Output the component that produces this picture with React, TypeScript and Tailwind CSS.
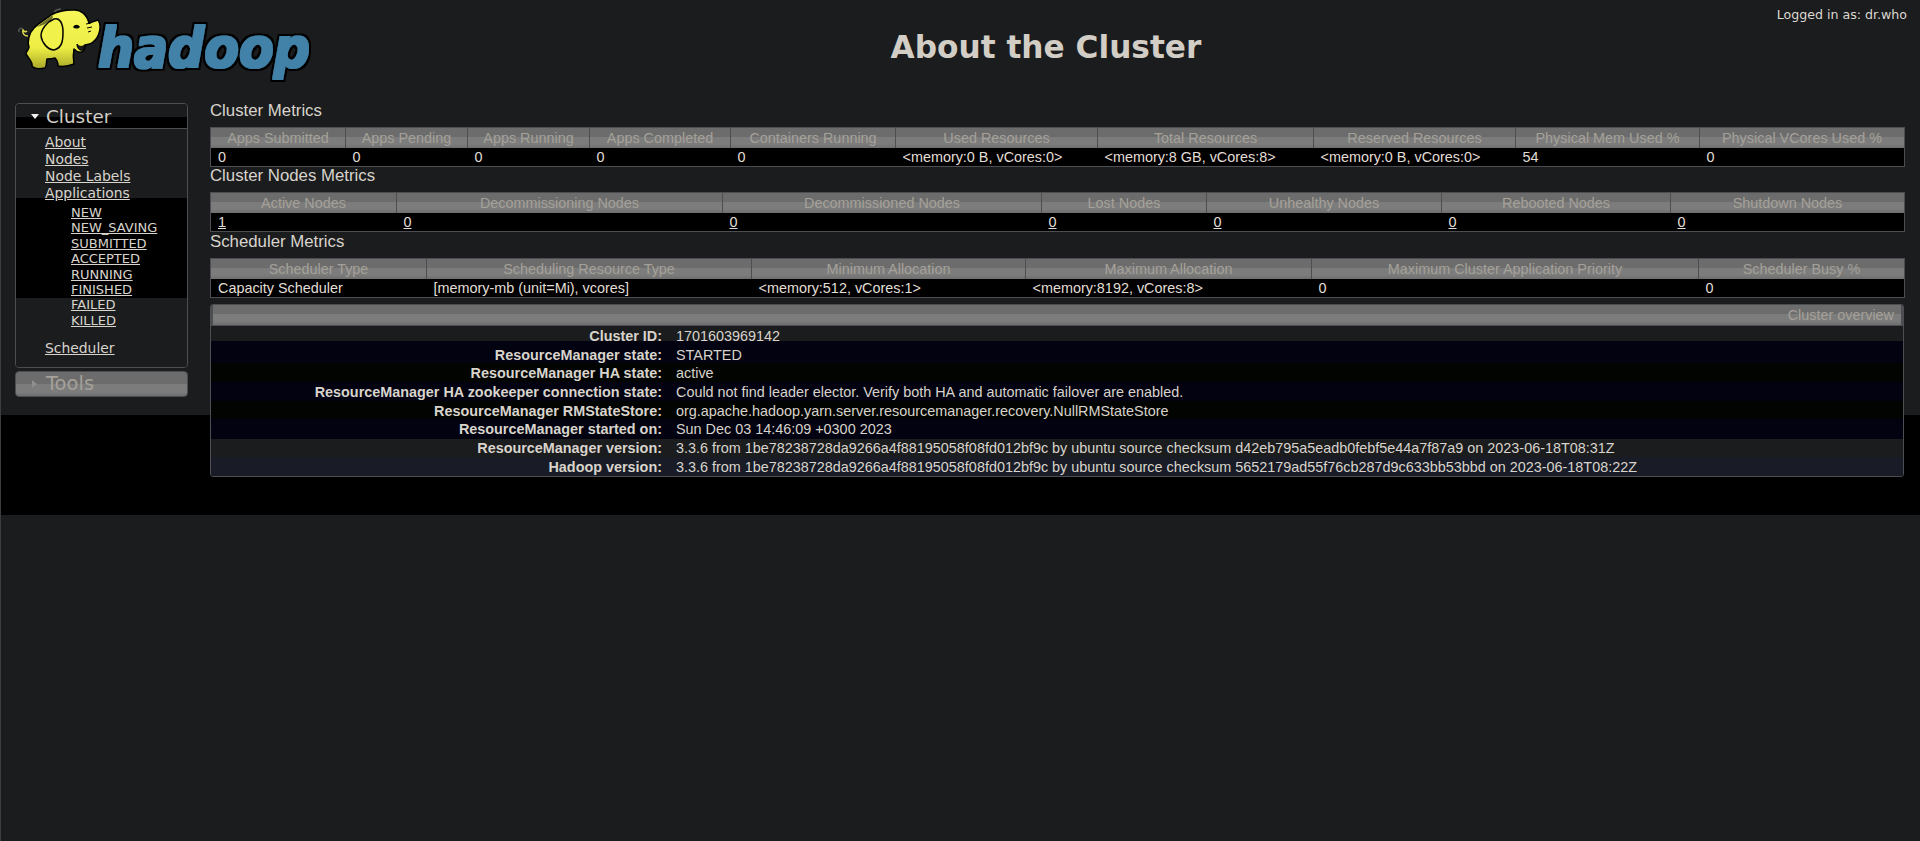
const clusterCols = [
  { label: 'Apps Submitted', width: 'w-[135px]', value: '0' },
  { label: 'Apps Pending', width: 'w-[122px]', value: '0' },
  { label: 'Apps Running', width: 'w-[122px]', value: '0' },
  { label: 'Apps Completed', width: 'w-[141px]', value: '0' },
  { label: 'Containers Running', width: 'w-[165px]', value: '0' },
  { label: 'Used Resources', width: 'w-[202px]', value: '<memory:0 B, vCores:0>' },
  { label: 'Total Resources', width: 'w-[216px]', value: '<memory:8 GB, vCores:8>' },
  { label: 'Reserved Resources', width: 'w-[202px]', value: '<memory:0 B, vCores:0>' },
  { label: 'Physical Mem Used %', width: 'w-[184px]', value: '54' },
  { label: 'Physical VCores Used %', width: 'w-[205px]', value: '0' },
];

const nodeCols = [
  { label: 'Active Nodes', width: 'w-[186px]', value: '1', link: true },
  { label: 'Decommissioning Nodes', width: 'w-[326px]', value: '0', link: true },
  { label: 'Decommissioned Nodes', width: 'w-[319px]', value: '0', link: true },
  { label: 'Lost Nodes', width: 'w-[165px]', value: '0', link: true },
  { label: 'Unhealthy Nodes', width: 'w-[235px]', value: '0', link: true },
  { label: 'Rebooted Nodes', width: 'w-[229px]', value: '0', link: true },
  { label: 'Shutdown Nodes', width: 'w-[234px]', value: '0', link: true },
];

const schedulerCols = [
  { label: 'Scheduler Type', width: 'w-[216px]', value: 'Capacity Scheduler' },
  { label: 'Scheduling Resource Type', width: 'w-[325px]', value: '[memory-mb (unit=Mi), vcores]' },
  { label: 'Minimum Allocation', width: 'w-[274px]', value: '<memory:512, vCores:1>' },
  { label: 'Maximum Allocation', width: 'w-[286px]', value: '<memory:8192, vCores:8>' },
  { label: 'Maximum Cluster Application Priority', width: 'w-[387px]', value: '0' },
  { label: 'Scheduler Busy %', width: 'w-[206px]', value: '0' },
];

const overview = [
  { label: 'Cluster ID:', value: '1701603969142', bg: 'bg-[linear-gradient(#1b1c1e_15px,#020210_15px)]' },
  { label: 'ResourceManager state:', value: 'STARTED', bg: 'bg-[#020210]' },
  { label: 'ResourceManager HA state:', value: 'active', bg: 'bg-[#020402]' },
  { label: 'ResourceManager HA zookeeper connection state:', value: 'Could not find leader elector. Verify both HA and automatic failover are enabled.', bg: 'bg-[#020210]' },
  { label: 'ResourceManager RMStateStore:', value: 'org.apache.hadoop.yarn.server.resourcemanager.recovery.NullRMStateStore', bg: 'bg-[#020402]' },
  { label: 'ResourceManager started on:', value: 'Sun Dec 03 14:46:09 +0300 2023', bg: 'bg-[#020210]' },
  { label: 'ResourceManager version:', value: '3.3.6 from 1be78238728da9266a4f88195058f08fd012bf9c by ubuntu source checksum d42eb795a5eadb0febf5e44a7f87a9 on 2023-06-18T08:31Z', bg: 'bg-[linear-gradient(#020210_1px,#1b1c1e_1px)]' },
  { label: 'Hadoop version:', value: '3.3.6 from 1be78238728da9266a4f88195058f08fd012bf9c by ubuntu source checksum 5652179ad55f76cb287d9c633bb53bbd on 2023-06-18T08:22Z', bg: 'bg-[#191c26]' },
];

const appStates = ['NEW', 'NEW_SAVING', 'SUBMITTED', 'ACCEPTED', 'RUNNING', 'FINISHED', 'FAILED', 'KILLED'];

const bandBg = 'bg-[linear-gradient(#6c6c6c_0,#6c6c6c_45%,#7c7c7c_45%,#7c7c7c_80%,#6e6e6e_100%)]';

function Logo() {
  return (
    <svg width="320" height="90" viewBox="0 0 320 90" className="block overflow-visible">
      <defs>
        <linearGradient id="ele" x1="0" y1="0" x2="0" y2="1">
          <stop offset="0" stopColor="#f7f75a" />
          <stop offset="0.65" stopColor="#eded45" />
          <stop offset="1" stopColor="#a8a828" />
        </linearGradient>
        <filter id="word" x="-5%" y="-20%" width="110%" height="140%">
          <feMorphology in="SourceGraphic" operator="dilate" radius="0.9 0.6" result="fat" />
          <feMorphology in="SourceAlpha" operator="dilate" radius="3.2" result="outline" />
          <feMerge>
            <feMergeNode in="outline" />
            <feMergeNode in="fat" />
          </feMerge>
        </filter>
      </defs>
      <text
        x="97"
        y="67"
        textLength="212"
        lengthAdjust="spacingAndGlyphs"
        fontFamily="'DejaVu Sans', sans-serif"
        fontWeight="700"
        fontStyle="italic"
        fontSize="56"
        fill="#4282a8"
        filter="url(#word)"
      >
        hadoop
      </text>
      {/* tail and motion marks */}
      <path d="M27 36C23 36 21 33 22 30C23 32 25 32 26 31" fill="none" stroke="#d8d850" strokeWidth="1.6" />
      <path d="M18 32C17 30 19 28 21 28M53 12C55 10 57 9 60 9" fill="none" stroke="#55564f" strokeWidth="1.5" />
      {/* body */}
      <path
        d="M72 10C80 9 86 15 88 23L97 20C101 25 99 37 92 42C89 45 86 44 84 45C84 50 82 53 78 52C76 52 74 50 73 49C72 54 72 59 73 64C68 66 62 67 57 66C57 63 56 60 54 58C51 59 48 59 46 59C45 63 46 66 44 68C39 69 33 69 31 66C32 62 28 59 25 54C25 51 28 50 28 47C26 42 28 33 33 28C39 22 44 20 50 15C57 11 64 10 72 10Z"
        fill="url(#ele)"
        stroke="#000"
        strokeWidth="1.5"
        strokeLinejoin="round"
      />
      {/* back shading */}
      <path d="M36 27C41 22 46 20 51 15C53 17 51 20 48 22C44 24 40 26 36 27Z" fill="#6f7030" />
      {/* ear */}
      <path
        d="M53 19C59 17 62 24 62 32C62 41 61 48 53 50C47 50 41 43 40 36C40 29 46 22 53 19Z"
        fill="#f1f14c"
        stroke="#000"
        strokeWidth="1.5"
      />
      {/* eye and trunk wrinkles */}
      <path d="M72 27C74 24 77 24 79 27C77 29 74 29 72 27Z" fill="#000" />
      <path d="M85 24L90 23M86 28L91 27M87 32L90 31" stroke="#000" strokeWidth="1" fill="none" />
      {/* mouth */}
      <path d="M76 44C78 47 81 47 84 45C84 50 81 51 79 50C77 49 76 47 76 44Z" fill="#1b1c1e" stroke="#000" strokeWidth="1" />
    </svg>
  );
}

function Triangle({ open }: { open: boolean }) {
  return open ? (
    <svg width="8" height="5" viewBox="0 0 8 5" className="shrink-0">
      <path d="M0 0H8L4 5Z" fill="#f2f2f2" />
    </svg>
  ) : (
    <svg width="5" height="8" viewBox="0 0 5 8" className="shrink-0">
      <path d="M0 0L5 4L0 8Z" fill="#8e8e8e" />
    </svg>
  );
}

function MetricTable({ cols }: { cols: { label: string; width: string; value: string; link?: boolean }[] }) {
  return (
    <table className="w-[1694px] table-fixed border-collapse border border-[#4c4e52] text-[14.4px] leading-[18px]">
      <thead>
        <tr className={bandBg}>
          {cols.map(c => (
            <th key={c.label} className={`${c.width} h-[20px] p-0 border-r border-[#4c4e52] text-center font-normal text-[#a5a199]`}>
              {c.label}
            </th>
          ))}
        </tr>
      </thead>
      <tbody>
        <tr className="bg-black">
          {cols.map(c => (
            <td key={c.label} className="h-[19px] p-0 pl-[7px] text-left text-[#e2ded6]">
              {c.link ? <a className="underline">{c.value}</a> : c.value}
            </td>
          ))}
        </tr>
      </tbody>
    </table>
  );
}

export default function App() {
  return (
    <div className="flex flex-col h-[841px] overflow-hidden bg-[#1b1c1e] border-l border-[#3b3d41] font-['Liberation_Sans',sans-serif] text-[#e2ded6]">
      <div className="relative z-10 h-[415px] shrink-0">
        <header className="flex h-[95px]">
          <div className="w-[319px] shrink-0">
            <Logo />
          </div>
          <h1 className="w-[1452px] pt-[26px] text-center text-[31.2px] leading-[42px] font-bold text-[#d2cec6] font-['DejaVu_Sans',sans-serif]">
            About the Cluster
          </h1>
          <div className="flex-1 pt-[8px] pr-[13px] text-right text-[12.6px] leading-[14px] text-[#dcd8d0] font-['DejaVu_Sans',sans-serif] whitespace-nowrap">
            Logged in as: dr.who
          </div>
        </header>

        <div className="flex pl-[14px]">
          <nav className="w-[173px] mt-[8px] shrink-0 font-['DejaVu_Sans',sans-serif]">
            <div className="border border-[#4c4e52] rounded-[4px] overflow-hidden">
              <div className="flex items-center h-[25px] pt-[1px] pl-[15px] gap-[7px] border-b border-[#4c4e52] bg-[linear-gradient(#1b1c1e_13px,#000_13px)] text-[18.4px] leading-[24px] text-[#d2cec6]">
                <Triangle open />
                Cluster
              </div>
              <div className="h-[238px] pt-[5px] pl-[29px] bg-[linear-gradient(#1b1c1e_69px,#000_69px,#000_169px,#1b1c1e_169px)] text-[13.9px] leading-[17px] text-[#d8d4cc]">
                <a className="block underline">About</a>
                <a className="block underline">Nodes</a>
                <a className="block underline">Node Labels</a>
                <a className="block underline">Applications</a>
                <ul className="pl-[26px] pt-[3px] text-[13px] leading-[15.4px]">
                  {appStates.map(s => (
                    <li key={s}>
                      <a className="underline">{s}</a>
                    </li>
                  ))}
                </ul>
                <a className="block mt-[12px] underline">Scheduler</a>
              </div>
            </div>
            <div className="flex items-center h-[26px] mt-[3px] pl-[16px] gap-[9px] rounded-[4px] border border-[#4c4e52] bg-[linear-gradient(#6c6c6c_50%,#7c7c7c_50%,#7c7c7c_85%,#6e6e6e_100%)] text-[19.5px] text-[#a5a199]">
              <Triangle open={false} />
              Tools
            </div>
          </nav>

          <main className="ml-[22px] w-[1694px] shrink-0">
            <h3 className="h-[32px] pt-[6px] text-[16.8px] leading-[20px] font-normal text-[#d8d4cc]">Cluster Metrics</h3>
            <MetricTable cols={clusterCols} />
            <h3 className="h-[25px] -mt-[1px] mb-[1px] text-[16.8px] leading-[20px] font-normal text-[#d8d4cc]">Cluster Nodes Metrics</h3>
            <MetricTable cols={nodeCols} />
            <h3 className="h-[26px] text-[16.8px] leading-[20px] font-normal text-[#d8d4cc]">Scheduler Metrics</h3>
            <MetricTable cols={schedulerCols} />

            <section className="mt-[6px] border border-[#4c4e52] rounded-[3px] overflow-hidden text-[14.4px] leading-[21px]">
              <div className={`${bandBg} h-[21px] pr-[7px] border-b border-[#4c4e52] text-right text-[#a5a199] border-x-[2px]`}>
                Cluster overview
              </div>
              {overview.map(row => (
                <div key={row.label} className={`${row.bg} grid grid-cols-[451px_1fr] gap-x-[14px] h-[18.7px]`}>
                  <div className="text-right font-bold text-[#d8d4cc]">{row.label}</div>
                  <div className="text-[#d8d4cc] whitespace-nowrap">{row.value}</div>
                </div>
              ))}
            </section>
          </main>
        </div>
      </div>
      <div className="h-[100px] shrink-0 bg-black" />
    </div>
  );
}
